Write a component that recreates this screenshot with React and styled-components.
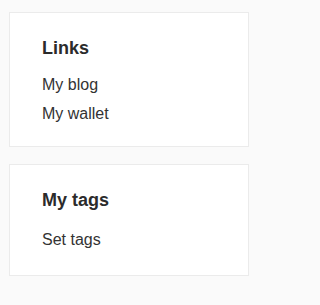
import React from "react";
import styled, { createGlobalStyle } from "styled-components";

const Global = createGlobalStyle`
  html, body { margin: 0; padding: 0; background: #fafafa; }
  body { font-family: "Liberation Sans", Arial, sans-serif; color: #333; }
`;

const Page = styled.div`
  display: flex;
  flex-direction: column;
  gap: 17px;
  width: 262px;
  box-sizing: border-box;
  padding: 12px 13px 0 9px;
`;

const Card = styled.section`
  background: #fff;
  border: 1px solid #ebebeb;
  padding: 23px 32px ${(p) => p.$bottom}px;
`;

const Title = styled.h3`
  margin: 0 0 ${(p) => p.$gap}px;
  font-size: 18px;
  line-height: 24px;
  font-weight: bold;
  color: #2b2b2b;
`;

const List = styled.ul`
  list-style: none;
  margin: 0;
  padding: 0;
`;

const Item = styled.li`
  font-size: 16px;
  line-height: 29px;
  color: #333;
`;

export default function App() {
  return (
    <>
      <Global />
      <Page>
        <Card $bottom={18}>
          <Title $gap={10}>Links</Title>
          <List>
            <Item>My blog</Item>
            <Item>My wallet</Item>
          </List>
        </Card>
        <Card $bottom={21}>
          <Title $gap={13}>My tags</Title>
          <List>
            <Item>Set tags</Item>
          </List>
        </Card>
      </Page>
    </>
  );
}
